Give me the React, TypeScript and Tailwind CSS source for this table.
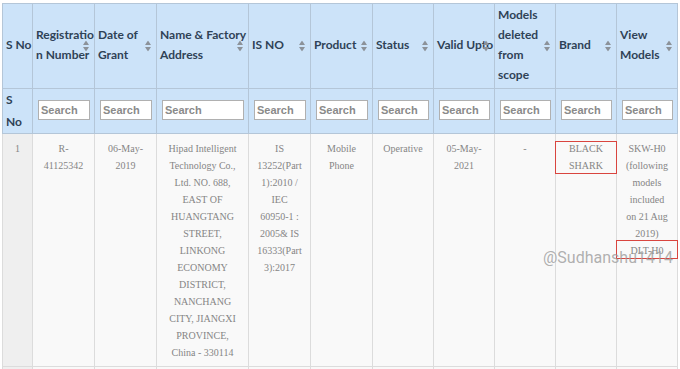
import React from 'react'

const columns = [
  { key: 'sno', width: 'w-[30px]', label: ['S No'], sort: false },
  { key: 'reg', width: 'w-[62px]', label: ['Registratio', 'n Number'], sort: true },
  { key: 'date', width: 'w-[62px]', label: ['Date of', 'Grant'], sort: true },
  { key: 'name', width: 'w-[92px]', label: ['Name & Factory', 'Address'], sort: true },
  { key: 'isno', width: 'w-[62px]', label: ['IS NO'], sort: true },
  { key: 'product', width: 'w-[62px]', label: ['Product'], sort: true },
  { key: 'status', width: 'w-[61px]', label: ['Status'], sort: true },
  { key: 'valid', width: 'w-[61px]', label: ['Valid Upto'], sort: true },
  { key: 'deleted', width: 'w-[61px]', label: ['Models', 'deleted', 'from', 'scope'], sort: true },
  { key: 'brand', width: 'w-[61px]', label: ['Brand'], sort: true },
  { key: 'view', width: 'w-[61px]', label: ['View', 'Models'], sort: true },
]

const row = [
  '1',
  'R-41125342',
  '06-May-2019',
  'Hipad Intelligent Technology Co., Ltd. NO. 688, EAST OF HUANGTANG STREET, LINKONG ECONOMY DISTRICT, NANCHANG CITY, JIANGXI PROVINCE, China - 330114',
  'IS 13252(Part 1):2010 / IEC 60950-1 : 2005& IS 16333(Part 3):2017',
  'Mobile Phone',
  'Operative',
  '05-May-2021',
  '-',
  'BLACK SHARK',
  'SKW-H0 (following models included on 21 Aug 2019) DLT-H0',
]

function SortIcon() {
  return (
    <svg className="absolute right-[5px] top-1/2 -translate-y-1/2" width="6" height="11" viewBox="0 0 6 11">
      <polygon points="3,0 6,4.5 0,4.5" fill="#8c9299" />
      <polygon points="0,6.5 6,6.5 3,11" fill="#8c9299" />
    </svg>
  )
}

export default function App() {
  return (
    <div className="relative w-[680px] h-[369px] overflow-hidden bg-white pt-[3px] pl-[2px]">
      <table className="table-fixed border-collapse w-[675px]">
        <colgroup>
          {columns.map((c) => (
            <col key={c.key} className={c.width} />
          ))}
        </colgroup>
        <thead className="font-['Lato',sans-serif] text-[12px] font-bold text-[#2f4256]">
          {/* Header */}
          <tr className="h-[85px] bg-[#cce3f9]">
            {columns.map((c) => (
              <th
                key={c.key}
                className="relative border border-[#b4c6d8] pl-[3px] pr-0 pb-[2px] text-left align-middle font-bold leading-[20px] whitespace-nowrap"
              >
                {c.label.map((l) => (
                  <div key={l}>{l}</div>
                ))}
                {c.sort && <SortIcon />}
              </th>
            ))}
          </tr>
          {/* Search row */}
          <tr className="h-[43px] bg-[#cce3f9]">
            <th className="border border-[#b4c6d8] pl-[3px] text-left align-middle font-bold leading-[22px]">
              S<br />No
            </th>
            {columns.slice(1).map((c) => (
              <th key={c.key} className="border border-[#b4c6d8] pl-[5px] pr-[4px] pb-[2px] align-middle">
                <input
                  placeholder="Search"
                  className="block w-full h-[20px] bg-white border border-[#b0b0b0] px-[2px] font-['Liberation_Sans',Arial,sans-serif] text-[11px] font-bold placeholder:text-[#8a8a8a] outline-none"
                />
              </th>
            ))}
          </tr>
        </thead>
        <tbody className="font-['Liberation_Serif','Times_New_Roman',serif] text-[10px] leading-[17px] text-[#858585]">
          <tr className="h-[233px]">
            {row.map((v, i) => (
              <td
                key={i}
                className={`border border-[#dcdcdc] px-2 pt-[6px] text-center align-top ${i === 0 ? 'bg-[#efefef]' : 'bg-[#f9f9f9]'}`}
              >
                {v}
              </td>
            ))}
          </tr>
          <tr className="h-[30px]">
            {row.map((_, i) => (
              <td key={i} className={`border border-[#dcdcdc] ${i === 0 ? 'bg-[#efefef]' : 'bg-[#f9f9f9]'}`} />
            ))}
          </tr>
        </tbody>
      </table>

      {/* annotations */}
      <div className="absolute left-[555px] top-[141px] w-[62px] h-[33px] border border-[#d9453f]" />
      <div className="absolute left-[616px] top-[240px] w-[62px] h-[19px] border border-[#d9453f]" />
      <div className="absolute left-[543px] top-[248px] font-['Roboto',sans-serif] text-[16px] leading-[20px] text-[#9c9c9c]/80 whitespace-nowrap">
        @Sudhanshu1414
      </div>
    </div>
  )
}
